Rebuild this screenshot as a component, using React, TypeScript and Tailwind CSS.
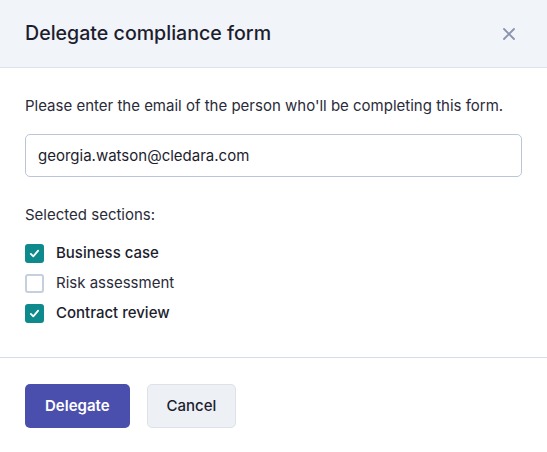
import { useState } from "react";

const sections = [
  { id: "business", label: "Business case", checked: true },
  { id: "risk", label: "Risk assessment", checked: false },
  { id: "contract", label: "Contract review", checked: true },
];

function Check({ on }: { on: boolean }) {
  return (
    <span
      className={
        on
          ? "flex h-[19px] w-[19px] items-center justify-center rounded-[3px] bg-[#0e8a8c]"
          : "flex h-[19px] w-[19px] items-center justify-center rounded-[3px] border-2 border-[#c4cfdf] bg-white"
      }
    >
      {on && (
        <svg viewBox="0 0 16 16" className="h-[13px] w-[13px]" fill="none" stroke="white" strokeWidth={2.2}>
          <path strokeLinecap="round" strokeLinejoin="round" d="M3.5 8.5l3 3 6-7" />
        </svg>
      )}
    </span>
  );
}

export default function App() {
  const [checked, setChecked] = useState<Record<string, boolean>>(
    Object.fromEntries(sections.map((s) => [s.id, s.checked]))
  );
  const [email, setEmail] = useState("georgia.watson@cledara.com");

  return (
    <div className="h-[452px] w-[547px] bg-white font-['Inter',sans-serif] text-[#1c1d2e]">
      {/* Header */}
      <div className="flex h-[68px] items-center justify-between border-b border-[#dfe4ec] bg-[#f1f4f8] pl-[25px] pr-[30px]">
        <h2 className="text-[19.6px] font-medium">Delegate compliance form</h2>
        <button className="text-[#8a93ad]">
          <svg viewBox="0 0 16 16" className="h-[16px] w-[16px]" fill="none" stroke="currentColor" strokeWidth={1.8}>
            <path strokeLinecap="round" d="M3 3l10 10M13 3L3 13" />
          </svg>
        </button>
      </div>

      {/* Body */}
      <div className="px-[25px] pt-[28px]">
        <p className="text-[15px] leading-[20px] text-[#2a2b3a]">
          Please enter the email of the person who'll be completing this form.
        </p>
        <input
          value={email}
          onChange={(e) => setEmail(e.target.value)}
          className="mt-[18px] h-[43px] w-full rounded-[5px] border border-[#bac6d8] px-[12px] text-[15px] text-[#1c1d2e] outline-none"
        />
        <p className="mt-[28px] text-[15px] leading-[20px] text-[#2a2b3a]">Selected sections:</p>
        <div className="mt-[19px] flex flex-col gap-[11px]">
          {sections.map((s) => (
            <label
              key={s.id}
              className="flex h-[19px] cursor-pointer items-center gap-[12px]"
              onClick={() => setChecked((c) => ({ ...c, [s.id]: !c[s.id] }))}
            >
              <Check on={checked[s.id]} />
              <span
                className={
                  checked[s.id]
                    ? "text-[15px] font-medium text-[#1c1d2e]"
                    : "text-[15px] text-[#2a2b3a]"
                }
              >
                {s.label}
              </span>
            </label>
          ))}
        </div>
      </div>

      {/* Footer */}
      <div className="mt-[34px] flex gap-[17px] border-t border-[#d6dde8] px-[25px] pt-[26px]">
        <button className="h-[44px] rounded-[5px] bg-[#4a4fae] px-[20px] text-[15px] font-semibold text-white">
          Delegate
        </button>
        <button className="h-[44px] rounded-[5px] border border-[#dde2ea] bg-[#edf0f5] px-[19px] text-[15px] font-medium text-[#1c1d2e]">
          Cancel
        </button>
      </div>
    </div>
  );
}
